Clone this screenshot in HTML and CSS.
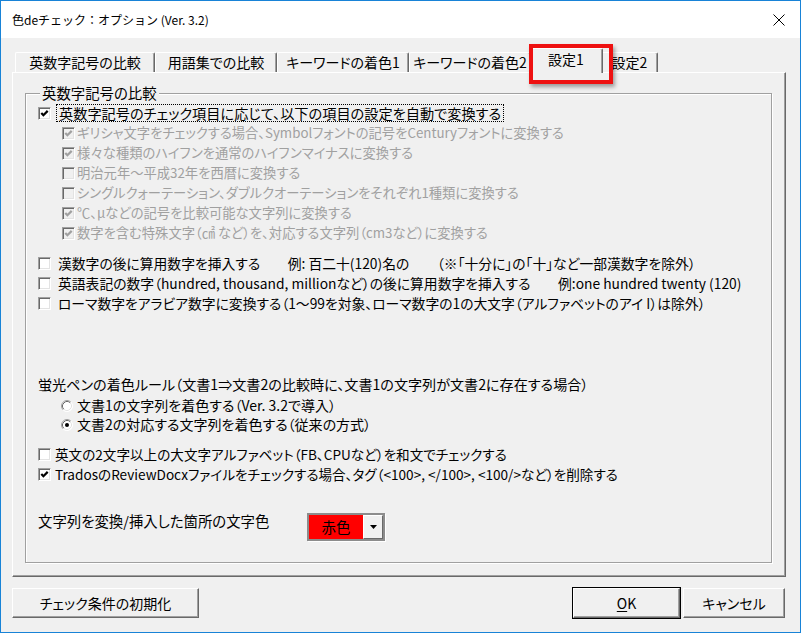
FILE: index.html
```html
<!DOCTYPE html>
<html lang="ja">
<head>
<meta charset="utf-8">
<title>色deチェック：オプション</title>
<link rel="stylesheet" href="styles.css">
</head>
<body>
<div class="window">
  <div class="titlebar">
    <span class="title">色deチェック：オプション (Ver. 3.2)</span>
    <svg class="close" width="12" height="12" viewBox="0 0 12 12"><path d="M0.5 0.5 L11.5 11.5 M11.5 0.5 L0.5 11.5" stroke="#000" stroke-width="1" fill="none"/></svg>
  </div>
  <div class="client">
    <div class="tabs">
      <div class="tab">英数字記号の比較</div>
      <div class="tab">用語集での比較</div>
      <div class="tab">キーワードの着色1</div>
      <div class="tab">キーワードの着色2</div>
      <div class="tab tab-active">設定1</div>
      <div class="tab">設定2</div>
    </div>
    <div class="panel">
      <div class="group">
        <div class="group-title">英数字記号の比較</div>

        <div class="row row-main">
          <span class="cb"><svg width="11" height="11" viewBox="0 0 11 11"><path class="mark" d="M2.3 5 L4.4 7.2 L8.7 2.9"/></svg></span>
          <span class="label focus">英数字記号のチェック項目に応じて、以下の項目の設定を自動で変換する</span>
        </div>

        <div class="sub">
          <div class="row row-sub disabled">
            <span class="cb"><svg width="11" height="11" viewBox="0 0 11 11"><path class="mark" d="M2.3 5 L4.4 7.2 L8.7 2.9"/></svg></span>
            <span class="label">ギリシャ文字をチェックする場合、Symbolフォントの記号をCenturyフォントに変換する</span>
          </div>
          <div class="row row-sub disabled">
            <span class="cb"><svg width="11" height="11" viewBox="0 0 11 11"><path class="mark" d="M2.3 5 L4.4 7.2 L8.7 2.9"/></svg></span>
            <span class="label">様々な種類のハイフンを通常のハイフンマイナスに変換する</span>
          </div>
          <div class="row row-sub disabled">
            <span class="cb"></span>
            <span class="label">明治元年～平成32年を西暦に変換する</span>
          </div>
          <div class="row row-sub disabled">
            <span class="cb"></span>
            <span class="label">シングルクォーテーション、ダブルクオーテーションをそれぞれ1種類に変換する</span>
          </div>
          <div class="row row-sub disabled">
            <span class="cb"><svg width="11" height="11" viewBox="0 0 11 11"><path class="mark" d="M2.3 5 L4.4 7.2 L8.7 2.9"/></svg></span>
            <span class="label">℃、μなどの記号を比較可能な文字列に変換する</span>
          </div>
          <div class="row row-sub disabled">
            <span class="cb"><svg width="11" height="11" viewBox="0 0 11 11"><path class="mark" d="M2.3 5 L4.4 7.2 L8.7 2.9"/></svg></span>
            <span class="label">数字を含む特殊文字（㎠ など）を、対応する文字列（cm3など）に変換する</span>
          </div>
        </div>

        <div class="block">
          <div class="row row-opt">
            <span class="cb"></span>
            <span class="label">漢数字の後に算用数字を挿入する　　例: 百二十(120)名の　　（※「十分に」の「十」など一部漢数字を除外）</span>
          </div>
          <div class="row row-opt">
            <span class="cb"></span>
            <span class="label">英語表記の数字（hundred, thousand, millionなど）の後に算用数字を挿入する　　例:one hundred twenty (120)</span>
          </div>
          <div class="row row-opt">
            <span class="cb"></span>
            <span class="label">ローマ数字をアラビア数字に変換する（1～99を対象、ローマ数字の1の大文字（アルファベットのアイ I）は除外）</span>
          </div>
        </div>

        <div class="heading">蛍光ペンの着色ルール（文書1⇒文書2の比較時に、文書1の文字列が文書2に存在する場合）</div>

        <div class="radios">
          <div class="row row-radio">
            <svg class="radio" width="12" height="12" viewBox="0 0 12 12"><circle cx="6" cy="6" r="5.5" fill="#fff"/><path d="M2.11 9.89 A5.5 5.5 0 0 1 9.89 2.11" stroke="#a0a0a0" fill="none"/><path d="M9.89 2.11 A5.5 5.5 0 0 1 2.11 9.89" stroke="#fff" fill="none"/><path d="M2.82 9.18 A4.5 4.5 0 0 1 9.18 2.82" stroke="#696969" fill="none"/><path d="M9.18 2.82 A4.5 4.5 0 0 1 2.82 9.18" stroke="#e3e3e3" fill="none"/></svg>
            <span class="label">文書1の文字列を着色する（Ver. 3.2で導入）</span>
          </div>
          <div class="row row-radio">
            <svg class="radio" width="12" height="12" viewBox="0 0 12 12"><circle cx="6" cy="6" r="5.5" fill="#fff"/><path d="M2.11 9.89 A5.5 5.5 0 0 1 9.89 2.11" stroke="#a0a0a0" fill="none"/><path d="M9.89 2.11 A5.5 5.5 0 0 1 2.11 9.89" stroke="#fff" fill="none"/><path d="M2.82 9.18 A4.5 4.5 0 0 1 9.18 2.82" stroke="#696969" fill="none"/><path d="M9.18 2.82 A4.5 4.5 0 0 1 2.82 9.18" stroke="#e3e3e3" fill="none"/><circle cx="6" cy="6" r="2" fill="#000"/></svg>
            <span class="label">文書2の対応する文字列を着色する（従来の方式）</span>
          </div>
        </div>

        <div class="block-bottom">
          <div class="row row-low">
            <span class="cb"></span>
            <span class="label">英文の2文字以上の大文字アルファベット（FB、CPUなど）を和文でチェックする</span>
          </div>
          <div class="row row-low">
            <span class="cb"><svg width="11" height="11" viewBox="0 0 11 11"><path class="mark" d="M2.3 5 L4.4 7.2 L8.7 2.9"/></svg></span>
            <span class="label">TradosのReviewDocxファイルをチェックする場合、タグ（&lt;100&gt;, &lt;/100&gt;, &lt;100/&gt;など）を削除する</span>
          </div>
        </div>

        <div class="color-row">
          <span class="color-label">文字列を変換/挿入した箇所の文字色</span>
          <div class="combo">
            <span class="combo-value">赤色</span>
            <span class="combo-btn"><svg width="7" height="4" viewBox="0 0 7 4"><path d="M0 0 H7 L3.5 4 Z" fill="#000"/></svg></span>
          </div>
        </div>
      </div>
    </div>
    <div class="buttons">
      <button class="btn btn-reset">チェック条件の初期化</button>
      <span class="spacer"></span>
      <button class="btn btn-ok btn-default"><u>O</u>K</button>
      <button class="btn btn-cancel">キャンセル</button>
    </div>
  </div>
</div>
</body>
</html>
```

FILE: styles.css
```css
* { box-sizing: border-box; }
html, body { margin: 0; padding: 0; }
body {
  width: 801px;
  height: 633px;
  overflow: hidden;
  background: #f0f0f0;
  font-family: "Noto Sans CJK JP", "Noto Sans", sans-serif;
  color: #000;
}
.window {
  width: 801px;
  height: 633px;
  border: 1px solid #1883d7;
  background: #f0f0f0;
  display: flex;
  flex-direction: column;
}
.titlebar {
  flex: none;
  height: 37px;
  background: #fff;
  display: flex;
  align-items: center;
  justify-content: space-between;
  padding: 0 15px 0 11px;
}
.title { font-size: 12px; line-height: 16px; }
.close { display: block; }

.client {
  flex: 1;
  display: flex;
  flex-direction: column;
  padding: 0 14px 0 11px;
  font-feature-settings: "palt";
}

/* tabs */
.tabs {
  flex: none;
  height: 34px;
  display: flex;
  align-items: flex-end;
  padding-left: 3px;
  position: relative;
  z-index: 1;
}
.tab {
  height: 20px;
  background: #f0f0f0;
  border-top: 1px solid #fff;
  border-left: 1px solid #fff;
  border-right: 1px solid #696969;
  box-shadow: inset -1px 0 0 #a0a0a0;
  border-radius: 2px 2px 0 0;
  font-size: 14px;
  line-height: 19px;
  text-align: center;
  white-space: nowrap;
  flex: none;
}
.tab:nth-child(1) { width: 140px; }
.tab:nth-child(2) { width: 122px; }
.tab:nth-child(3) { width: 132px; }
.tab:nth-child(4) { width: 122px; }
.tab:nth-child(6) { width: 57px; }
.tab-active {
  width: 74px;
  height: 25px;
  margin: 0 -2px -1px -2px;
  line-height: 21px;
  position: relative;
  z-index: 2;
}
.tab-active::after {
  content: "";
  position: absolute;
  left: -1px;
  top: -5px;
  width: 76px;
  height: 32px;
  border: 4px solid #ee1111;
  box-shadow: 2px 3px 4px rgba(0, 0, 0, 0.35);
}

/* panel */
.panel {
  flex: none;
  height: 505px;
  background: #f0f0f0;
  border-top: 1px solid #fff;
  border-left: 1px solid #fff;
  border-right: 1px solid #696969;
  border-bottom: 1px solid #696969;
  box-shadow: inset -1px -1px 0 #a0a0a0;
  padding: 20px 13px 13px 12px;
  display: flex;
}
.group {
  flex: 1;
  border: 1px solid #a0a0a0;
  box-shadow: inset 1px 1px 0 #fff, 1px 1px 0 #fff;
  display: flex;
  flex-direction: column;
  font-size: 14.4px;
}
.group-title {
  align-self: flex-start;
  margin: -10px 0 0 14px;
  padding: 0 2px;
  line-height: 18px;
  background: #f0f0f0;
}

/* rows */
.row {
  display: flex;
  align-items: center;
  height: 20px;
  white-space: nowrap;
}
.label { line-height: 20px; }
.row-main { margin-top: 1px; padding-left: 12px; font-size: 14.2px; }
.row-main .label { margin-left: 6px; padding: 0 2px; line-height: 16px; outline: 1px dotted #000; outline-offset: 0; }
.row-sub { padding-left: 36px; font-size: 13.3px; }
.row-sub .label { margin-left: 2px; }
.block { margin-top: 10px; }
.row-opt { padding-left: 12px; font-size: 13.8px; }
.row-opt .label { margin-left: 7px; }
.heading { margin-top: 61px; padding-left: 12px; line-height: 20px; white-space: nowrap; font-size: 14.1px; }
.radios { margin-top: 2px; }
.row-radio { height: 19px; padding-left: 35px; font-size: 14px; }
.row-radio .label { margin-left: 4px; line-height: 19px; }
.radio { flex: none; display: block; }
.block-bottom { margin-top: 10px; }
.row-low { height: 20px; padding-left: 12px; font-size: 13.6px; }
.row-low .label { margin-left: 4px; line-height: 20px; }

/* checkbox */
.cb {
  flex: none;
  width: 13px;
  height: 13px;
  background: #fff;
  border-top: 1px solid #a0a0a0;
  border-left: 1px solid #a0a0a0;
  border-right: 1px solid #fff;
  border-bottom: 1px solid #fff;
  box-shadow: inset 1px 1px 0 #696969, inset -1px -1px 0 #e3e3e3;
}
.cb svg { display: block; }
.mark { fill: none; stroke: #000; stroke-width: 2.2; }
.disabled { color: #a0a0a0; }
.disabled .cb { background: #f0f0f0; }
.disabled .mark { stroke: #a0a0a0; }

/* colour selector */
.color-row {
  margin-top: 27px;
  padding-left: 12px;
  display: flex;
  align-items: flex-start;
}
.color-label { line-height: 20px; width: 269px; white-space: nowrap; }
.combo {
  margin-top: 2px;
  display: flex;
  width: 78px;
  height: 28px;
  border: 2px solid #8c8c8c;
  box-shadow: 1px 1px 0 #fff;
}
.combo-value {
  flex: 1;
  background: #ff0000;
  text-align: center;
  line-height: 24px;
  font-size: 14.4px;
}
.combo-btn {
  flex: none;
  width: 20px;
  background: #f0f0f0;
  border-top: 1px solid #fff;
  border-left: 1px solid #fff;
  border-right: 1px solid #696969;
  border-bottom: 1px solid #696969;
  display: flex;
  align-items: center;
  justify-content: center;
}
.combo-btn svg { display: block; }

/* buttons */
.buttons {
  flex: none;
  display: flex;
  margin-top: 11px;
  height: 30px;
  padding-right: 1px;
}
.spacer { flex: 1; }
.btn {
  height: 30px;
  background: #f0f0f0;
  border-top: 1px solid #fff;
  border-left: 1px solid #fff;
  border-right: 1px solid #696969;
  border-bottom: 1px solid #696969;
  box-shadow: inset -1px -1px 0 #a0a0a0;
  font-family: "Noto Sans CJK JP", "Noto Sans", sans-serif;
  font-feature-settings: "palt";
  font-size: 14px;
  color: #000;
  padding: 0;
  margin: 0;
}
.btn-reset { width: 187px; }
.btn-ok { width: 107px; margin-right: 3px; }
.btn-cancel { width: 102px; }
.btn-default { outline: 1px solid #000; outline-offset: 0; }
.btn u { text-decoration: underline; text-underline-offset: 2px; }
```
